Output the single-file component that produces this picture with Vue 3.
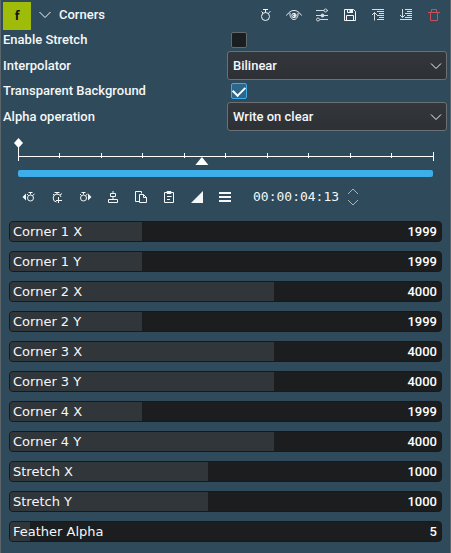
<script setup>
import { ref, reactive } from 'vue'

const enableStretch = ref(false)
const transparent = ref(true)
const interpolator = ref('Bilinear')
const alphaOperation = ref('Write on clear')
const timecode = ref('00:00:04:13')
const ticks = [10, 20, 30, 40, 50, 60, 70, 80, 90]

const params = reactive([
  { name: 'Corner 1 X', value: 1999, fill: 30.7 },
  { name: 'Corner 1 Y', value: 1999, fill: 30.7 },
  { name: 'Corner 2 X', value: 4000, fill: 61.3 },
  { name: 'Corner 2 Y', value: 1999, fill: 30.7 },
  { name: 'Corner 3 X', value: 4000, fill: 61.3 },
  { name: 'Corner 3 Y', value: 4000, fill: 61.3 },
  { name: 'Corner 4 X', value: 1999, fill: 30.7 },
  { name: 'Corner 4 Y', value: 4000, fill: 61.3 },
  { name: 'Stretch X', value: 1000, fill: 46 },
  { name: 'Stretch Y', value: 1000, fill: 46 },
  { name: 'Feather Alpha', value: 5, fill: 4.7 },
])
</script>

<template>
  <main class="panel">
    <header class="head">
      <span class="badge">f</span>
      <button class="fold" aria-label="Collapse">
        <svg width="14" height="8" viewBox="0 0 14 8"><path d="M1.500 1 7 6.500 12.500 1" /></svg>
      </button>
      <h1 class="title">Corners</h1>
      <div class="actions">
        <button class="tool" aria-label="Keyframes">
          <svg viewBox="0 0 16 16"><circle cx="7.500" cy="9.500" r="4" /><path d="M5 2.500h5M7.500 2.500v3M10.500 6l2-1.500M3.500 4.500l1.500 1.500" /></svg>
        </button>
        <button class="tool" aria-label="Show effect">
          <svg viewBox="0 0 16 16"><path d="M.5 8.500C3 4.800 5.500 3.500 8 3.500s5 1.300 7.500 5M4 5.800C3.600 9.500 5.500 12.500 8 12.500s4.400-3 4-6.700" /><circle cx="8" cy="8.500" r="2.200" /><circle class="solid" cx="8.500" cy="8.500" r="1" /></svg>
        </button>
        <button class="tool" aria-label="Presets">
          <svg class="soft" viewBox="0 0 16 16"><path d="M2 3.500h8M13 3.500h1M2 8.500h12M6 12.500h8" /><circle cx="11.500" cy="3.500" r="1.500" /><circle class="solid" cx="8.500" cy="8.500" r="1.500" /><circle cx="4" cy="12.500" r="1.500" /></svg>
        </button>
        <button class="tool" aria-label="Save">
          <svg viewBox="0 0 16 16"><path d="M2.500 2.500h9l2 2v9h-11zM4.500 13.500v-5h7v5M5.500 2.500v3h5v-3" /><path class="solid" d="M8 2.500h2.500v3H8z" /></svg>
        </button>
        <button class="tool" aria-label="Move up">
          <svg class="soft" viewBox="0 0 16 16"><path d="M2 2.500h12M7 4.500h7M9 6.500h5M7 8.500h7M9 10.500h5M7 12.500h7M4.500 13.500v-8M2 8l2.500-2.500L7 8" /></svg>
        </button>
        <button class="tool" aria-label="Move down">
          <svg class="soft" viewBox="0 0 16 16"><path d="M7 2.500h7M9 4.500h5M7 6.500h7M9 8.500h5M7 10.500h7M2 12.500h12M4.500 2v8.500M2 8l2.500 2.500L7 8" /></svg>
        </button>
        <button class="tool danger" aria-label="Delete">
          <svg viewBox="0 0 16 16"><path d="M2 5.500h12M4.500 5.500v8h7v-8M5.500 5.500v-3h5v3" /></svg>
        </button>
      </div>
    </header>

    <section class="form">
      <label for="stretch">Enable Stretch</label>
      <input id="stretch" v-model="enableStretch" class="check" type="checkbox" />

      <label for="interp">Interpolator</label>
      <div class="combo">
        <select id="interp" v-model="interpolator">
          <option>Bilinear</option>
        </select>
        <svg width="12" height="8" viewBox="0 0 12 8"><path d="M1 1.500 6 6.500 11 1.500" /></svg>
      </div>

      <label for="transparent">Transparent Background</label>
      <input id="transparent" v-model="transparent" class="check" type="checkbox" />

      <label for="alpha">Alpha operation</label>
      <div class="combo">
        <select id="alpha" v-model="alphaOperation">
          <option>Write on clear</option>
        </select>
        <svg width="12" height="8" viewBox="0 0 12 8"><path d="M1 1.500 6 6.500 11 1.500" /></svg>
      </div>
    </section>

    <section class="timeline">
      <svg class="ruler" height="28">
        <line x1="0" x2="100%" y1="18.500" y2="18.500" />
        <line x1="0" x2="0" y1="6" y2="23" />
        <line x1="100%" x2="100%" y1="14" y2="23" />
        <line v-for="t in ticks" :key="t" :x1="t + '%'" :x2="t + '%'" y1="15" y2="20" />
        <path class="solid" d="M.5 0 5 5 .5 10-4 5z" />
        <svg x="44.300%" y="19"><path class="solid" d="M0 0 6.500 8h-13z" /></svg>
      </svg>
      <div class="zoombar"></div>
    </section>

    <section class="toolbar">
      <button class="tool" aria-label="Previous keyframe">
        <svg viewBox="0 0 16 16"><path class="fill" d="M5 4.500v7L1.500 8z" /><circle cx="9.500" cy="9" r="3" /><path d="M7.500 3.500h4M9.500 3.500v2M11.500 6.500l2-1.500M6 5l1.500 1.500" /></svg>
      </button>
      <button class="tool" aria-label="Add keyframe">
        <svg viewBox="0 0 16 16"><path d="M7.500 13A4 4 0 1 1 12 8M5.500 3.500h5M8 3.500v2M11 6l2-1.500M4 5l1.500 1.500M9.500 8v6M7 11.500h6" /></svg>
      </button>
      <button class="tool" aria-label="Next keyframe">
        <svg viewBox="0 0 16 16"><path class="fill" d="M11 4.500v7L14.500 8z" /><circle cx="6.500" cy="9" r="3" /><path d="M4.500 3.500h4M6.500 3.500v2M8.500 6.500l2-1.500M3 5l1.500 1.500" /></svg>
      </button>
      <button class="tool" aria-label="Align to playhead">
        <svg viewBox="0 0 16 16"><path d="M5.500 4.500h5v3h-5zM3.500 10.500h9v3h-9zM8 2v2.500M8 7.500v3" /></svg>
      </button>
      <button class="tool" aria-label="Copy">
        <svg viewBox="0 0 16 16"><path d="M6.500 12.500h-4v-10h6v2M6.500 5.500h4l3 3v5h-7zM10.500 5.500v3h3" /></svg>
      </button>
      <button class="tool" aria-label="Paste">
        <svg viewBox="0 0 16 16"><path d="M3.500 3.500h9v10h-9zM6 7.500h4.500M6 10.500h3" /><path class="solid" d="M6 2.500h4v2H6z" /></svg>
      </button>
      <button class="tool" aria-label="Interpolation type">
        <svg viewBox="0 0 16 16"><path class="fill" d="M14 2v12H2z" /></svg>
      </button>
      <button class="tool" aria-label="Menu">
        <svg viewBox="0 0 16 16"><path class="fill" d="M2 3h12v2H2zM2 7h12v2H2zM2 11h12v2H2z" /></svg>
      </button>
      <input v-model="timecode" class="timecode" type="text" size="11" aria-label="Position" />
      <div class="spin">
        <button aria-label="Step forward"><svg width="12" height="7" viewBox="0 0 12 7"><path d="M1 6 6 1l5 5" /></svg></button>
        <button aria-label="Step back"><svg width="12" height="7" viewBox="0 0 12 7"><path d="M1 1l5 5 5-5" /></svg></button>
      </div>
    </section>

    <section class="params">
      <div v-for="(p, i) in params" :key="p.name" class="param">
        <input :id="'param' + i" v-model.number="p.fill" type="range" min="0" max="100" step="0.1" :style="{ '--fill': p.fill + '%' }" />
        <label :for="'param' + i">{{ p.name }}</label>
        <output :for="'param' + i">{{ p.value }}</output>
      </div>
    </section>
  </main>
</template>

<style>
body {
  background: #2f4a5b;
}
</style>

<style scoped>
* {
  box-sizing: border-box;
}
.panel {
  min-height: 100vh;
  padding: 2px 3px 10px 2px;
  border: solid #5c6569;
  border-width: 0 1px;
  background: #2f4a5b;
  color: #f4f7f8;
  font: 500 13px/20px Roboto, sans-serif;
}
svg {
  display: block;
  fill: none;
  stroke: currentColor;
}
.solid {
  fill: currentColor;
}
.fill {
  fill: currentColor;
  stroke: none;
}
.soft {
  opacity: 0.85;
}
button {
  display: grid;
  place-items: center;
  padding: 0;
  border: 0;
  background: none;
  color: inherit;
}
.head {
  display: flex;
  align-items: flex-start;
  height: 28px;
}
.badge {
  display: grid;
  place-items: center;
  width: 28px;
  height: 28px;
  background: #9fbc0b;
  color: #111;
  font: 700 12px/20px "Noto Sans", sans-serif;
}
.fold {
  width: 28px;
  height: 26px;
}
.title {
  flex: 1;
  margin: 0;
  font: inherit;
  line-height: 26px;
}
.actions,
.toolbar {
  display: flex;
  align-items: center;
}
.actions {
  margin-right: -1px;
}
.tool {
  width: 28px;
  height: 26px;
}
.tool svg {
  width: 16px;
  height: 16px;
}
.danger {
  color: #c94f5c;
}
.form {
  display: grid;
  grid-template-columns: 224px 1fr;
  grid-template-rows: 20px 29px 20px 29px;
  row-gap: 1px;
  align-items: center;
}
.check {
  appearance: none;
  display: grid;
  place-items: center;
  width: 16px;
  height: 16px;
  margin: 0 4px;
  border: 1px solid #626a6e;
  border-radius: 2px;
  background: #1b1e20;
}
.check:checked {
  border-color: #3daee9;
  background: #2d6688;
}
.check:checked::after {
  content: "";
  width: 10px;
  height: 6px;
  margin-bottom: 3px;
  border: solid #fff;
  border-width: 0 0 2px 2px;
  transform: rotate(-45deg);
}
.combo {
  display: grid;
  align-items: center;
  height: 29px;
}
.combo > * {
  grid-area: 1 / 1;
}
.combo select {
  appearance: none;
  width: 100%;
  height: 29px;
  padding: 0 24px 0 5px;
  border: 1px solid #6a7073;
  border-radius: 3px;
  background: linear-gradient(#33373c, #2d3035);
  color: inherit;
  font: inherit;
}
.combo svg {
  justify-self: end;
  margin-right: 5px;
  pointer-events: none;
}
.timeline {
  padding: 7px 14px 0 15px;
}
.ruler {
  width: 100%;
  overflow: visible;
  color: #fff;
}
.ruler svg {
  overflow: visible;
}
.ruler line {
  shape-rendering: crispEdges;
}
.ruler .solid {
  stroke: none;
}
.zoombar {
  height: 7px;
  margin-top: 4px;
  border-radius: 2px;
  background: #3daee9;
}
.toolbar {
  height: 26px;
  margin-top: 7px;
  padding-left: 12px;
}
.timecode {
  width: 92px;
  margin-left: 14px;
  padding: 0;
  border: 0;
  background: none;
  color: inherit;
  font: 13px/20px "DejaVu Sans Mono", monospace;
}
.spin {
  display: grid;
  gap: 4px;
  margin-left: 2px;
  color: #aab5bb;
}
.params {
  display: grid;
  gap: 9px;
  margin-top: 11px;
  padding: 0 5px 0 6px;
}
.param {
  display: grid;
  grid-template-columns: 1fr auto;
  align-items: center;
  height: 21px;
  border: 1px solid #171a1c;
  border-radius: 4px;
  background: #1b1d1e;
  overflow: hidden;
}
.param input {
  appearance: none;
  grid-area: 1 / 1 / 2 / 3;
  width: 100%;
  height: 19px;
  margin: 0;
  background: linear-gradient(#31363b, #31363b) 0 0 / var(--fill) 100% no-repeat;
}
.param input::-webkit-slider-thumb {
  appearance: none;
  width: 1px;
  height: 19px;
}
.param label {
  grid-area: 1 / 1;
  padding-left: 3px;
  font: 13px/19px "DejaVu Sans", sans-serif;
  pointer-events: none;
}
.param output {
  grid-area: 1 / 2;
  padding-right: 4px;
  color: #fff;
  line-height: 19px;
  pointer-events: none;
}
</style>
